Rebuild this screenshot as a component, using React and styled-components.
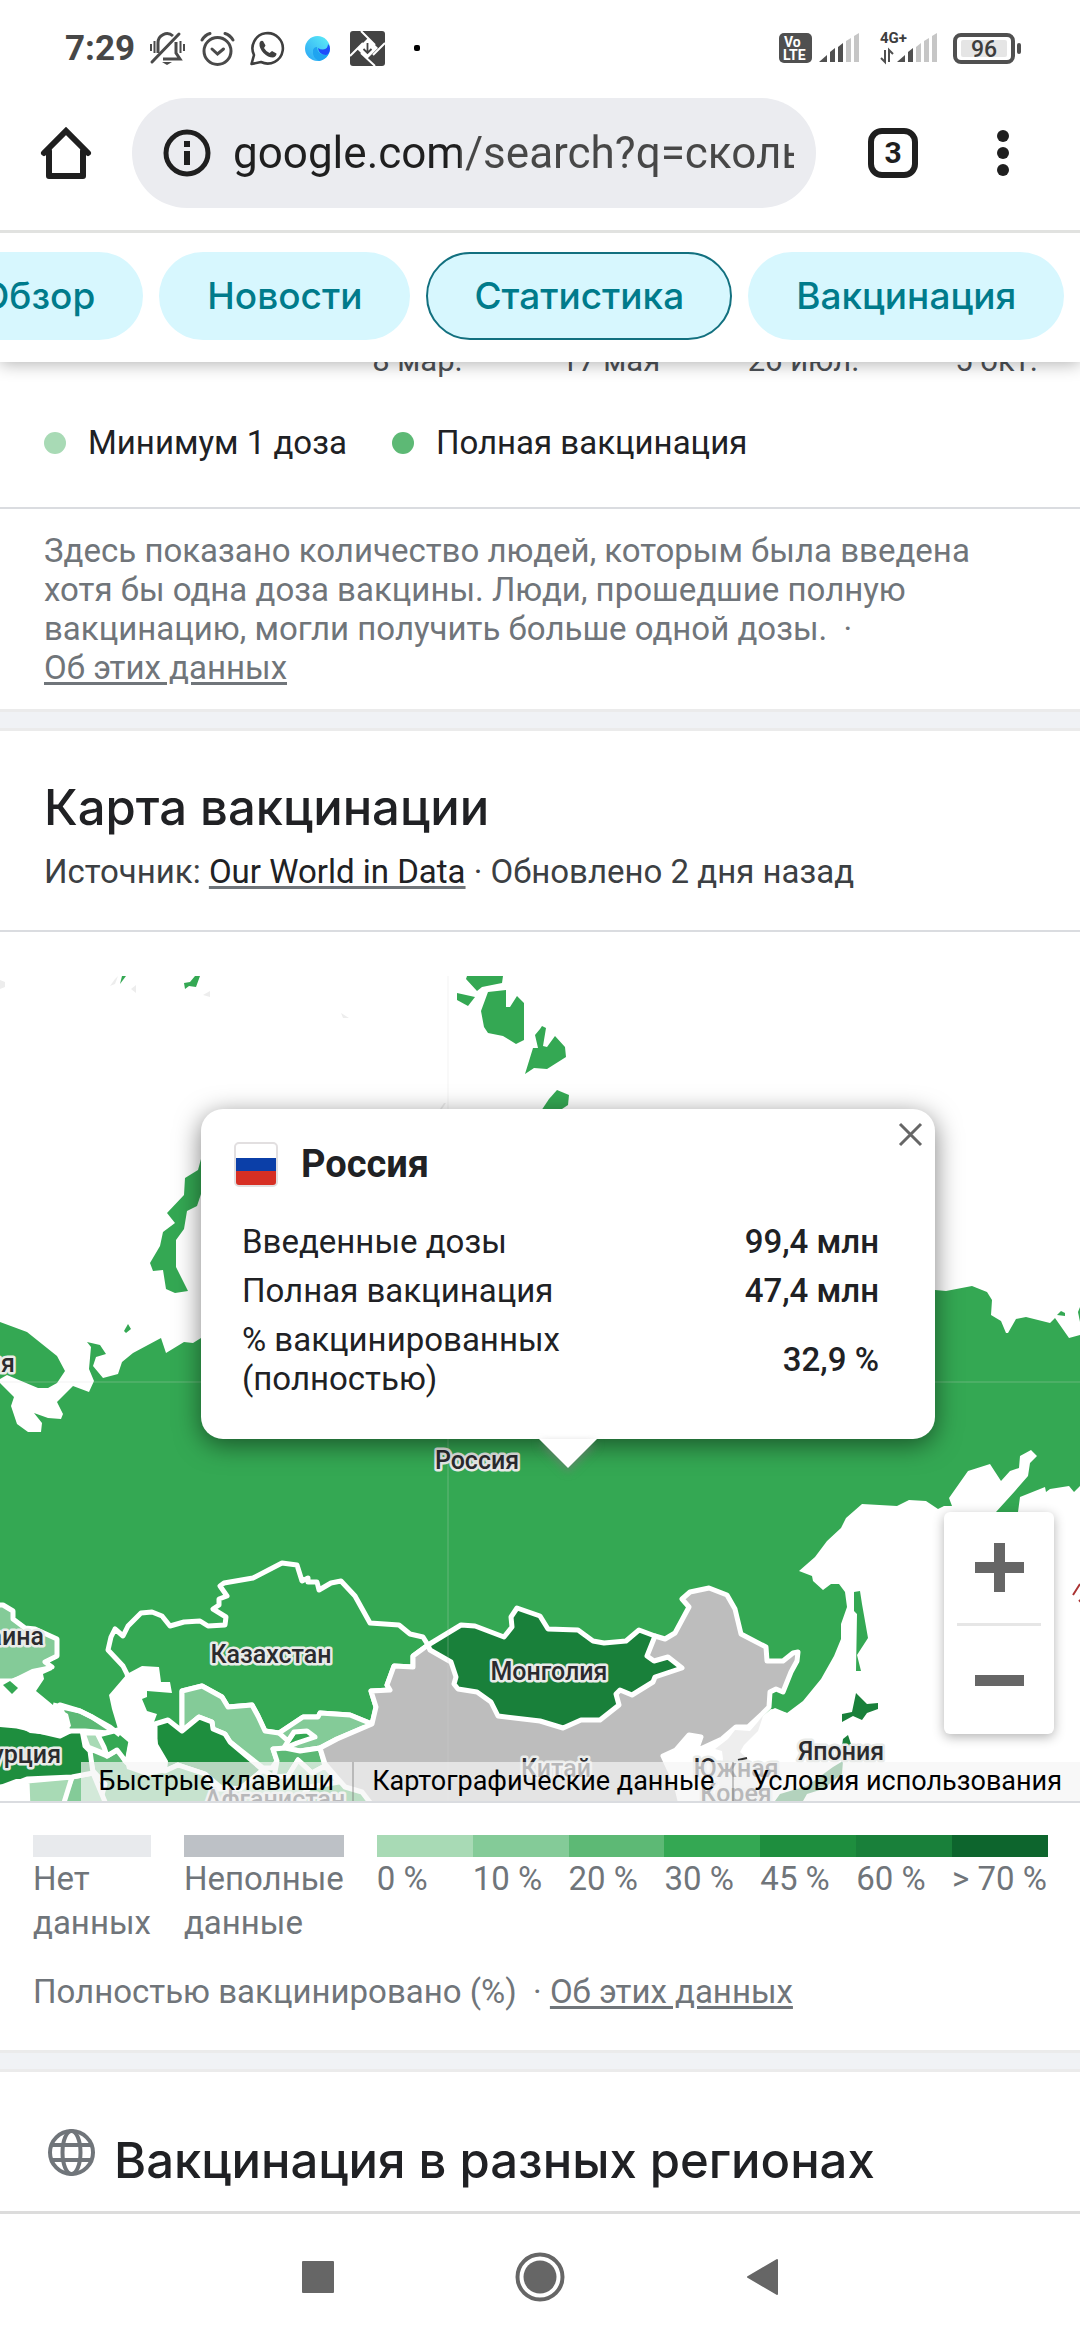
import React from 'react';
import styled, { createGlobalStyle } from 'styled-components';

const GlobalStyle = createGlobalStyle`
  * {
    box-sizing: border-box;
  }
  body {
    margin: 0;
    background-color: #fff;
    color: #202124;
    font-family: Roboto, 'Noto Sans', sans-serif;
    font-size: 33px;
    line-height: 39px;
  }
  button {
    padding: 0;
    border: none;
    background: none;
    color: inherit;
    font: inherit;
    cursor: pointer;
  }
  svg {
    display: block;
    overflow: visible;
  }
`;

const Page = styled.div`
  display: flex;
  flex-direction: column;
  min-height: 100vh;
  overflow: hidden;
`;

const Header = styled.header`
  position: relative;
  z-index: 2;
  background-color: #fff;
  box-shadow: 0 2px 16px rgba(0, 0, 0, 0.3);
`;

const StatusBar = styled.div`
  display: flex;
  justify-content: space-between;
  align-items: center;
  height: 96px;
  padding: 0 58px 0 65px;
  color: #474747;
`;

const StatusGroup = styled.div`
  display: flex;
  align-items: center;
  gap: ${props => props.gap || '15px'};
`;

const Clock = styled.span`
  font-size: 35px;
  font-weight: 700;
`;

const MoreDot = styled.span`
  width: 6px;
  height: 6px;
  margin-left: 14px;
  border-radius: 2px;
  background-color: #000;
`;

const Toolbar = styled.div`
  display: flex;
  align-items: center;
  padding: 2px 71px 22px 41px;
  border-bottom: 3px solid #e1e2e0;
  color: #1f1f1f;
`;

const AddressBar = styled.div`
  display: flex;
  flex: 1;
  align-items: center;
  gap: 22px;
  min-width: 0;
  height: 110px;
  margin: 0 52px 0 41px;
  padding: 0 22px 0 31px;
  border-radius: 55px;
  background-color: #ebecf0;
`;

const AddressInput = styled.input`
  flex: 1;
  min-width: 0;
  padding: 0;
  border: none;
  outline: none;
  background: linear-gradient(to right, #1f1f1f 227px, #474747 227px);
  background-clip: text;
  color: transparent;
  font-family: inherit;
  font-size: 44px;
  line-height: 56px;
`;

const TabsButton = styled.button`
  flex: none;
  width: 50px;
  height: 50px;
  margin-right: 79px;
  border: 6px solid #1f1f1f;
  border-radius: 14px;
  font-size: 30px;
  font-weight: 700;
  line-height: 38px;
`;

const Chips = styled.nav`
  display: flex;
  gap: 16px;
  margin-left: -67px;
  padding: 19px 0 22px;
  overflow: hidden;
`;

const Chip = styled.a`
  flex: none;
  padding: 0 ${props => (props.$active ? '46px' : '48px')};
  border: ${props => (props.$active ? '2px solid #12707f' : 'none')};
  border-radius: 44px;
  background-color: #d7f7fe;
  color: #007b8b;
  font-family: Inter, Roboto, sans-serif;
  font-size: 37px;
  font-weight: 500;
  line-height: ${props => (props.$active ? '84px' : '88px')};
  text-decoration: none;
`;

const AxisDates = styled.div`
  display: grid;
  grid-template-columns: repeat(4, 193px);
  margin: -19px 0 44px 321px;
  color: #4d5156;
  font-size: 31px;
  line-height: 36px;
  text-align: center;
`;

const ChartLegend = styled.div`
  display: flex;
  gap: 45px;
  padding: 0 44px 45px;
`;

const LegendItem = styled.span`
  display: flex;
  align-items: center;
  gap: 22px;
`;

const Dot = styled.span`
  width: 22px;
  height: 22px;
  border-radius: 50%;
  background-color: ${props => props.color};
`;

const Note = styled.p`
  margin: 0;
  padding: 22px 90px 22px 44px;
  border-top: 2px solid #dadce0;
  color: #70757a;
`;

const TextLink = styled.a`
  color: inherit;
  text-decoration-thickness: 3px;
  text-underline-offset: 3px;
`;

const SourceLink = styled(TextLink)`
  color: #202124;
  text-decoration-color: #70757a;
`;

const Band = styled.div`
  height: 22px;
  border-top: 3px solid #ebebeb;
  border-bottom: 3px solid #ebebeb;
  background-color: #f0f2f5;
`;

const CardHeader = styled.div`
  padding: 49px 44px 39px;
  border-bottom: 2px solid #dadce0;
`;

const Title = styled.h2`
  margin: 0;
  font-family: Inter, Roboto, sans-serif;
  font-size: 49px;
  font-weight: 500;
  line-height: 56px;
`;

const Source = styled.p`
  margin: 16px 0 0;
  color: #3c4043;
`;

const MapBox = styled.div`
  position: relative;
  margin-top: 44px;
  border-bottom: 2px solid #dadce0;
`;

const MapLabel = styled.text`
  fill: #2b2b2f;
  stroke: #e9ebe9;
  stroke-width: 5px;
  stroke-linejoin: round;
  paint-order: stroke;
  font-size: 25px;
  font-weight: 500;
  text-anchor: ${props => props.$anchor || 'middle'};
`;

const Popup = styled.div`
  position: absolute;
  top: 133px;
  left: 201px;
  width: 734px;
  padding: 32px 56px 36px 33px;
  border-radius: 22px;
  background-color: #fff;
  box-shadow: 0 6px 26px rgba(0, 0, 0, 0.5);

  &::after {
    content: '';
    position: absolute;
    top: 100%;
    left: 50%;
    margin-left: -29px;
    border: 29px solid transparent;
    border-top-color: #fff;
    border-bottom: none;
    filter: drop-shadow(0 4px 4px rgba(120, 120, 120, 0.6));
  }
`;

const CloseButton = styled.button`
  position: absolute;
  top: 14px;
  right: 13px;
`;

const PopupTitle = styled.h3`
  display: flex;
  align-items: center;
  gap: 23px;
  margin: 0 0 30px;
  font-size: 38px;
  font-weight: 700;
  line-height: 46px;
`;

const Flag = styled.span`
  width: 44px;
  height: 45px;
  border: 2px solid #e2dfe0;
  border-radius: 5px;
  background: linear-gradient(#fff 34%, #0b3fa8 34% 66%, #d72f24 66%);
`;

const StatsTable = styled.table`
  width: 100%;
  border-collapse: collapse;

  th {
    max-width: 360px;
    padding: 5px 8px;
    font-weight: 400;
    text-align: left;
  }
  td {
    padding: 5px 0;
    font-weight: 500;
    text-align: right;
    white-space: nowrap;
  }
`;

const ZoomControl = styled.div`
  position: absolute;
  top: 536px;
  right: 26px;
  display: flex;
  flex-direction: column;
  width: 110px;
  padding: 0 13px;
  border-radius: 6px;
  background-color: #fff;
  box-shadow: 0 3px 12px rgba(0, 0, 0, 0.3);
`;

const ZoomButton = styled.button`
  display: flex;
  justify-content: center;
  align-items: center;
  height: 111px;

  & + & {
    border-top: 3px solid #e6e6e6;
  }
`;

const Attribution = styled.div`
  position: absolute;
  right: 0;
  bottom: 0;
  display: flex;
  background-color: rgba(245, 245, 245, 0.7);
  font-size: 27px;

  a,
  button {
    padding: 0 18px;
    color: #000;
    text-decoration: none;
    white-space: nowrap;
  }
  a {
    border-left: 2px solid rgba(120, 120, 120, 0.4);
  }
`;

const MapLegend = styled.div`
  display: flex;
  gap: 33px;
  padding: 32px 32px 27px 33px;
  color: #70757a;
  line-height: 44px;
`;

const Scale = styled.div`
  display: grid;
  flex: 1;
  grid-template-columns: repeat(7, 1fr);
`;

const LegendCell = styled.div`
  width: ${props => (props.$narrow ? 'min-content' : 'auto')};
  white-space: ${props => (props.$narrow ? 'normal' : 'nowrap')};

  &::before {
    content: '';
    display: block;
    height: 22px;
    background-color: ${props => props.color};
  }
`;

const MapNote = styled.p`
  margin: 0;
  padding: 0 33px 39px;
  color: #70757a;
`;

const RegionsHeader = styled.div`
  display: flex;
  gap: 19px;
  padding: 57px 48px 19px;

  ${Title} {
    padding-top: 4px;
  }
`;

const NavBar = styled.nav`
  display: flex;
  justify-content: center;
  align-items: center;
  gap: 181px;
  height: 129px;
  margin-top: auto;
  border-top: 3px solid #dcdcdc;
`;

const Battery = styled.svg`
  margin-left: 8px;
`;

const MobileSignal = styled.svg`
  margin-left: ${props => (props.$network ? '13px' : '0')};
`;

const GREEN = '#34a853';

const scale = [
  ['0 %', '#a8dab5'],
  ['10 %', '#84cb98'],
  ['20 %', '#5db975'],
  ['30 %', '#34a853'],
  ['45 %', '#1e8e3e'],
  ['60 %', '#19803a'],
  ['> 70 %', '#0d652d'],
];

const stats = [
  ['Введенные дозы', '99,4 млн'],
  ['Полная вакцинация', '47,4 млн'],
  ['% вакцинированных (полностью)', '32,9 %'],
];

// land without outlines: mainland coast and islands
const russia = [
  '0,1384 14,1398 11,1407 17,1425 28,1433 41,1433 42,1424 34,1414 48,1419 61,1420 63,1415 57,1403 73,1387 89,1393 94,1382 89,1370 91,1348 87,1343 100,1346 106,1355 96,1358 93,1367 103,1379 118,1375 122,1363 133,1354 161,1339 166,1354 184,1343 193,1344 201,1339 300,1300 600,1320 935,1291 946,1292 972,1287 987,1293 992,1301 991,1316 1001,1322 1006,1334 1008,1334 1016,1320 1026,1318 1050,1324 1055,1319 1069,1339 1080,1336 1080,1487 1074,1493 1069,1487 1050,1490 1046,1493 1045,1488 1020,1498 1018,1513 1010,1560 996,1550 996,1513 1015,1492 1028,1477 1030,1464 1037,1457 1031,1451 1020,1457 1019,1469 1010,1472 1001,1482 990,1465 968,1472 949,1499 952,1507 944,1507 938,1510 926,1502 909,1501 897,1507 862,1505 846,1519 841,1529 827,1542 815,1558 799,1572 812,1577 813,1582 823,1591 831,1585 839,1585 845,1593 847,1608 841,1625 841,1640 834,1657 821,1680 803,1702 787,1714 775,1709 771,1711 700,1802 0,1802',
  '0,1323 27,1333 57,1357 65,1372 57,1384 48,1389 38,1389 7,1376 0,1380',
  '230,1130 201,1160 198,1171 185,1179 184,1196 167,1214 175,1224 163,1233 160,1247 150,1264 153,1272 163,1271 166,1290 175,1294 188,1292 176,1268 176,1241 184,1230 187,1212 197,1207 201,1195 230,1180',
  '124,1332 128,1325 131,1330 126,1334',
  '184,984 190,983 195,977 200,977 196,988 189,987 185,990',
  '120,985 122,977 126,977',
  '466,980 467,977 503,977 502,984 482,988 477,992',
  '457,994 475,998 468,1007 457,1001',
  '488,993 506,991 506,1008 510,1008 517,997 524,1004 524,1041 516,1045 503,1037 488,1034 484,1028 481,1012',
  '540,1030 535,1036 538,1049 533,1049 525,1075 534,1069 547,1070 566,1058 565,1048 555,1037 547,1048 543,1047 546,1029 542,1027',
  '541,1112 549,1100 557,1091 569,1096 568,1106 559,1112',
  '1057,1316 1061,1312 1065,1314 1065,1317',
  '1080,1308 1078,1313 1080,1323',
  '854,1593 860,1592 862,1605 868,1639 857,1656 861,1672 856,1672 857,1615 854,1612',
];

const countries = [
  // Kazakhstan
  [GREEN, '428,1646 423,1638 410,1635 399,1626 370,1624 355,1597 341,1582 331,1584 319,1591 317,1583 308,1583 308,1579 302,1582 297,1566 282,1564 253,1579 224,1584 220,1587 227,1597 219,1600 219,1606 213,1610 226,1618 225,1626 208,1627 200,1622 184,1623 170,1627 162,1617 152,1613 141,1614 128,1627 123,1637 115,1630 111,1638 108,1651 123,1667 127,1675 140,1730 182,1732 182,1692 202,1687 222,1698 228,1708 252,1706 258,1717 265,1732 279,1734 303,1718 318,1718 320,1714 350,1716 372,1725 376,1708 371,1692 390,1691 387,1686 394,1667 413,1668 413,1657'],
  // Uzbekistan
  ['#84cb98', '182,1732 182,1692 202,1687 222,1698 228,1708 252,1706 258,1717 265,1732 279,1734 294,1733 283,1750 273,1750 277,1762 272,1769 263,1769 230,1743 225,1735 213,1730 212,1723 199,1718'],
  // Kyrgyzstan
  ['#84cb98', '279,1734 303,1718 318,1718 320,1714 350,1716 372,1725 337,1740 320,1749 300,1752 285,1749 297,1744 315,1738 307,1732 294,1733 288,1742'],
  // Turkmenistan
  ['#1e8e3e', '155,1725 168,1721 182,1732 199,1718 212,1723 213,1730 225,1735 230,1743 263,1771 240,1790 220,1788 205,1775 178,1766 165,1772 155,1750'],
  // Tajikistan
  ['#5db975', '273,1750 285,1749 300,1752 320,1749 325,1767 312,1774 298,1761 288,1777 274,1778 277,1762'],
  // Afghanistan
  ['#a8dab5', '205,1802 214,1790 240,1790 263,1771 274,1778 288,1777 298,1761 312,1774 325,1767 339,1783 310,1788 290,1810 205,1810'],
  // Iran
  ['#5db975', '88,1749 107,1757 119,1750 125,1762 165,1772 178,1766 205,1775 216,1790 205,1810 98,1810 105,1785 93,1772'],
  // Iraq and Syria
  ['#84cb98', '72,1778 93,1774 108,1810 60,1810'],
  ['#a8dab5', '27,1782 72,1778 62,1810 28,1810'],
  // Turkey
  ['#1e8e3e', '-6,1725 17,1727 60,1737 72,1731 82,1731 85,1747 90,1752 93,1774 72,1778 27,1780 7,1788 -6,1788'],
  // Caucasus
  ['#5db975', '60,1706 80,1712 92,1718 110,1730 108,1734 85,1732 68,1732'],
  ['#a8dab5', '83,1734 98,1734 108,1756 88,1748'],
  [GREEN, '98,1736 118,1731 131,1742 127,1764 117,1751 107,1757 104,1748'],
  // Ukraine
  ['#84cb98', '-6,1606 3,1606 13,1612 13,1620 25,1629 35,1630 57,1640 57,1657 45,1663 52,1668 12,1682 -6,1682'],
  // China
  ['#bdbdbd', '428,1646 413,1657 413,1668 394,1667 387,1686 390,1691 371,1692 376,1708 372,1725 337,1740 320,1749 325,1765 345,1788 362,1793 375,1810 682,1810 676,1785 663,1757 676,1751 689,1736 701,1738 696,1752 722,1740 736,1728 748,1728 762,1715 769,1708 770,1693 776,1690 783,1693 791,1673 797,1662 798,1653 793,1654 783,1662 767,1662 766,1648 741,1635 735,1610 727,1596 709,1589 690,1593 682,1600 689,1608 675,1634 665,1640 655,1637 540,1690'],
  // Mongolia
  ['#19803a', '428,1646 461,1626 475,1627 504,1638 512,1628 511,1618 517,1609 540,1617 548,1630 578,1631 593,1642 604,1644 626,1642 639,1631 655,1637 647,1657 654,1662 668,1658 682,1669 655,1678 653,1683 632,1696 620,1691 616,1695 619,1706 600,1721 581,1721 563,1729 540,1722 498,1717 491,1703 477,1693 458,1690 454,1685 456,1678 451,1663 430,1651'],
];

const seas = [
  '-6,1680 12,1680 32,1670 52,1666 52,1671 43,1675 44,1680 36,1692 53,1706 68,1715 71,1727 60,1737 30,1734 17,1727 -6,1727',
  '127,1675 109,1696 112,1710 118,1730 129,1742 125,1762 127,1770 147,1777 167,1773 168,1762 158,1745 154,1723 157,1715 147,1712 142,1700 147,1698 147,1692 172,1694 170,1683 161,1683 159,1668 142,1667',
  '682,1802 676,1785 663,1757 676,1751 689,1736 701,1738 696,1752 722,1742 736,1730 748,1730 764,1716 771,1710 787,1714 800,1730 800,1802',
  '0,1786 16,1780 27,1780 28,1802 0,1802',
];

const korea = '763,1717 758,1732 744,1746 740,1753 757,1768 765,1790 762,1802 720,1802 718,1775 723,1760 722,1752 715,1750 728,1740 735,1731 750,1732';

const japan = [
  '856,1694 867,1705 878,1704 878,1710 867,1714 862,1721 853,1717 842,1723 842,1715 852,1713',
  '843,1740 848,1736 852,1748 842,1747',
  '843,1762 842,1775 823,1790 807,1795 803,1802 775,1802 780,1795 807,1787 833,1768',
];

const MapCanvas = styled.svg`
  width: 100%;
  overflow: hidden;
`;

const VaccinationMap = () => (
  <MapCanvas viewBox="0 977 1080 825" role="img" aria-label="Карта вакцинации">
    <g fill="#ededed">
      <path d="M0 981l5 2v5l-5 2zM110 987l5-7 3-3-3 8zM131 990l5-4v8zM203 996l7-4v6zM341 1014l8 5h-6zM440 1110l4-6h2l-4 6z" />
    </g>
    <g fill={GREEN}>
      {russia.map(points => <polygon key={points} points={points} />)}
    </g>
    <g stroke="#fff" strokeWidth="5" strokeLinejoin="round">
      {countries.map(([fill, points]) => <polygon key={points} fill={fill} points={points} />)}
    </g>
    <path d="M53 1706l27 6 12 6 18 10 10 8" fill="none" stroke="#fff" strokeWidth="5" />
    <g fill="#fff">
      {seas.map(points => <polygon key={points} points={points} />)}
    </g>
    <polygon points="3,1686 10,1682 18,1689 12,1695" fill={GREEN} />
    <polygon points={korea} fill="#eee" />
    <path d="M738 1761l9-2M735 1768q-4 6 0 12M734 1788v14" fill="none" stroke="#333" strokeWidth="2" />
    <g fill="#19803a">
      {japan.map(points => <polygon key={points} points={points} />)}
    </g>
    <path d="M448 977v825M0 1383h1080" stroke="#d8d8d8" strokeOpacity="0.3" strokeWidth="1" />
    <path d="M1073 1596l7-11M1079 1601l3 3" stroke="#a33" strokeWidth="2" />
    <MapLabel x="477" y="1470">Россия</MapLabel>
    <MapLabel x="271" y="1664">Казахстан</MapLabel>
    <MapLabel x="549" y="1681">Монголия</MapLabel>
    <MapLabel x="841" y="1761">Япония</MapLabel>
    <MapLabel x="556" y="1778">Китай</MapLabel>
    <MapLabel x="736" y="1778">Южная</MapLabel>
    <MapLabel x="736" y="1803">Корея</MapLabel>
    <MapLabel x="275" y="1809">Афганистан</MapLabel>
    <MapLabel x="44" y="1646" $anchor="end">Украина</MapLabel>
    <MapLabel x="61" y="1764" $anchor="end">Турция</MapLabel>
    <MapLabel x="15" y="1373" $anchor="end">Финляндия</MapLabel>
  </MapCanvas>
);

const MutedIcon = () => (
  <svg width="35" height="35" viewBox="0 0 35 35" fill="none" stroke="#4a4a4a" strokeWidth="3">
    <path d="M8 22V12a9 9 0 0 1 15-7M26 11v11l4 6H13" />
    <path d="M2 31L29 3" strokeLinecap="round" />
    <path d="M1 13v7M4.500 10v12M34 13v7M30.500 10v12" strokeWidth="2" />
    <path d="M12 31h10l-5 3z" fill="#4a4a4a" stroke="none" />
  </svg>
);

const AlarmIcon = () => (
  <svg width="35" height="35" viewBox="0 0 35 35" fill="none" stroke="#4a4a4a" strokeWidth="3" strokeLinecap="round">
    <circle cx="17.500" cy="20" r="13.500" />
    <path d="M12 18l5.500 5 6-5M2 9q3-5 8-6.500M33 9q-3-5-8-6.500" />
  </svg>
);

const WhatsAppIcon = () => (
  <svg width="35" height="35" viewBox="0 0 35 35">
    <path d="M1.500 33l2.500-9A15.200 15.200 0 1 1 11 31z" fill="none" stroke="#3f3f3f" strokeWidth="2.600" strokeLinejoin="round" />
    <path d="M9.500 12q1-3 3.500-2l2.500 4.500-1.500 2.500q2 3.500 5.500 5l2.500-2 4.500 2.500q0 3-3.500 4-5 0-9.500-4.500-4.500-5-4-10z" fill="#3f3f3f" />
  </svg>
);

const SwirlIcon = () => (
  <svg width="35" height="35" viewBox="0 0 35 35">
    <defs>
      <linearGradient id="swirl" x1="0" y1="1" x2="1" y2="0">
        <stop offset="0" stopColor="#2aa4f5" />
        <stop offset="1" stopColor="#5ff0f7" />
      </linearGradient>
    </defs>
    <circle cx="17.500" cy="17.500" r="12.500" fill="url(#swirl)" />
    <path d="M13 19q-1 8 6 11a12.500 12.500 0 0 0 10-8q-4 3-8 1-4-2-4-7-3 0-4 3z" fill="#1fa4f0" />
    <path d="M18 17q1 7 8 7 4-1 4-6.500 0-3-2-4.500 0 5-5 5.500-3 0-5-1.500z" fill="#1f4dfb" />
  </svg>
);

const DownloadTile = () => (
  <svg width="35" height="35" viewBox="0 0 35 35">
    <rect width="35" height="35" rx="3" fill="#434343" />
    <path d="M18 7l10 10-11 11L7 18z" fill="#fff" />
    <path d="M11 0l14 14M35 12L23 24M25 35L11 22M0 25l13-13" stroke="#fff" strokeWidth="2" />
    <path d="M17.500 12v10M13.500 18l4 4 4-4" fill="none" stroke="#434343" strokeWidth="1.800" />
  </svg>
);

const Signal = ({ active, network }) => (
  <MobileSignal $network={network} width={network ? 58 : 41} height="34" viewBox={network ? '0 0 58 34' : '17 0 41 34'}>
    {network && (
      <>
        <text x="0" y="12" fontSize="15" fontWeight="700" fill="#3d3d3d">{network}</text>
        <path d="M5 19v12l-4-4M9 31V19l4 4" fill="none" stroke="#505050" strokeWidth="2" />
      </>
    )}
    {['17,31 25,24 25,31', '28,21 33,17 33,31 28,31', '36,16 41,12 41,31 36,31', '44,10 49,7 49,31 44,31', '52,5 57,2 57,31 52,31'].map((points, i) => (
      <polygon key={points} points={points} fill={i < active ? '#505050' : '#c6c6c6'} />
    ))}
  </MobileSignal>
);

export default function App() {
  return (
    <Page>
      <GlobalStyle />
      <Header>
        <StatusBar>
          <StatusGroup>
            <Clock>7:29</Clock>
            <MutedIcon />
            <AlarmIcon />
            <WhatsAppIcon />
            <SwirlIcon />
            <DownloadTile />
            <MoreDot />
          </StatusGroup>
          <StatusGroup gap="7px">
            <svg width="33" height="30" viewBox="0 0 33 30">
              <rect width="33" height="30" rx="5" fill="#505050" />
              <g fill="#fff" fontSize="14" fontWeight="700">
                <text x="5" y="14">Vo</text>
                <text x="4" y="27">LTE</text>
              </g>
            </svg>
            <Signal active={3} />
            <Signal active={2} network="4G+" />
            <Battery width="69" height="31" viewBox="0 0 69 31">
              <rect x="2" y="2" width="58" height="27" rx="6" fill="#fff" stroke="#505050" strokeWidth="4" />
              <rect x="8" y="7" width="46" height="17" rx="2" fill="#e5e5e5" />
              <rect x="64" y="10" width="4" height="11" rx="2" fill="#505050" />
              <text x="31" y="24" fontSize="23" fontWeight="500" textAnchor="middle" fill="#3d3d3d">96</text>
            </Battery>
          </StatusGroup>
        </StatusBar>
        <Toolbar>
          <button aria-label="Главная страница">
            <svg width="50" height="52" viewBox="0 0 50 52" fill="none" stroke="currentColor" strokeWidth="6" strokeLinejoin="round" strokeLinecap="round">
              <path d="M3 26L25 4l22 22" strokeLinejoin="miter" />
              <path d="M8 24v25h34V24" />
            </svg>
          </button>
          <AddressBar>
            <button aria-label="Сведения о сайте">
              <svg width="48" height="48" viewBox="0 0 48 48">
                <circle cx="24" cy="24" r="21" fill="none" stroke="currentColor" strokeWidth="5" />
                <path d="M21 12h6v6h-6zM21 22h6v14h-6z" fill="currentColor" />
              </svg>
            </button>
            <AddressInput aria-label="Адресная строка" defaultValue="google.com/search?q=сколько" />
          </AddressBar>
          <TabsButton aria-label="Вкладки">3</TabsButton>
          <button aria-label="Меню">
            <svg width="12" height="46" viewBox="0 0 12 46" fill="currentColor">
              <circle cx="6" cy="6" r="6" />
              <circle cx="6" cy="23" r="6" />
              <circle cx="6" cy="40" r="6" />
            </svg>
          </button>
        </Toolbar>
        <Chips>
          <Chip href="#overview">Обзор</Chip>
          <Chip href="#news">Новости</Chip>
          <Chip href="#stats" $active>Статистика</Chip>
          <Chip href="#vaccine">Вакцинация</Chip>
          <Chip href="#tests">Тесты</Chip>
        </Chips>
      </Header>

      <section>
        <AxisDates>
          <span>8 мар.</span>
          <span>17 мая</span>
          <span>26 июл.</span>
          <span>5 окт.</span>
        </AxisDates>
        <ChartLegend>
          <LegendItem><Dot color="#a8dab5" />Минимум 1 доза</LegendItem>
          <LegendItem><Dot color="#5db975" />Полная вакцинация</LegendItem>
        </ChartLegend>
        <Note>
          Здесь показано количество людей, которым была введена хотя бы одна доза вакцины. Люди, прошедшие полную
          вакцинацию, могли получить больше одной дозы.&nbsp; ·<br />
          <TextLink href="#about">Об этих данных</TextLink>
        </Note>
      </section>
      <Band />

      <section>
        <CardHeader>
          <Title>Карта вакцинации</Title>
          <Source>
            Источник: <SourceLink href="#owid">Our World in Data</SourceLink> · Обновлено 2 дня назад
          </Source>
        </CardHeader>
        <MapBox>
          <VaccinationMap />
          <Attribution>
            <button>Быстрые клавиши</button>
            <a href="#map-data">Картографические данные</a>
            <a href="#terms">Условия использования</a>
          </Attribution>
          <Popup>
            <CloseButton aria-label="Закрыть">
              <svg width="23" height="23" viewBox="0 0 23 23" stroke="#666" strokeWidth="3">
                <path d="M1 1l21 21M22 1L1 22" />
              </svg>
            </CloseButton>
            <PopupTitle><Flag />Россия</PopupTitle>
            <StatsTable>
              <tbody>
                {stats.map(([name, value]) => (
                  <tr key={name}>
                    <th scope="row">{name}</th>
                    <td>{value}</td>
                  </tr>
                ))}
              </tbody>
            </StatsTable>
          </Popup>
          <ZoomControl>
            <ZoomButton aria-label="Увеличить">
              <svg width="49" height="49" viewBox="0 0 49 49" fill="#666">
                <path d="M19 0h11v19h19v11H30v19H19V30H0V19h19z" />
              </svg>
            </ZoomButton>
            <ZoomButton aria-label="Уменьшить">
              <svg width="49" height="11" viewBox="0 0 49 11" fill="#666">
                <path d="M0 0h49v11H0z" />
              </svg>
            </ZoomButton>
          </ZoomControl>
        </MapBox>
        <MapLegend>
          <LegendCell $narrow color="#e8eaed">Нет данных</LegendCell>
          <LegendCell $narrow color="#bdc1c6">Неполные данные</LegendCell>
          <Scale>
            {scale.map(([label, color]) => (
              <LegendCell key={label} color={color}>{label}</LegendCell>
            ))}
          </Scale>
        </MapLegend>
        <MapNote>
          Полностью вакцинировано (%)&nbsp; · <TextLink href="#about-map">Об этих данных</TextLink>
        </MapNote>
      </section>
      <Band />

      <RegionsHeader>
        <svg width="47" height="47" viewBox="0 0 47 47" fill="none" stroke="#70757a" strokeWidth="4">
          <circle cx="23.500" cy="23.500" r="21.500" />
          <ellipse cx="23.500" cy="23.500" rx="9" ry="21.500" />
          <path d="M4 16h39M4 31h39" />
        </svg>
        <Title>Вакцинация в разных регионах</Title>
      </RegionsHeader>

      <NavBar>
        <button aria-label="Недавние приложения">
          <svg width="32" height="32" viewBox="0 0 32 32">
            <rect width="32" height="32" rx="1" fill="#666" />
          </svg>
        </button>
        <button aria-label="Домой">
          <svg width="50" height="50" viewBox="0 0 50 50">
            <circle cx="25" cy="25" r="22.500" fill="none" stroke="#666" strokeWidth="4" />
            <circle cx="25" cy="25" r="16.500" fill="#666" />
          </svg>
        </button>
        <button aria-label="Назад">
          <svg width="32" height="38" viewBox="0 0 32 38">
            <path d="M31 2v34L2 19z" fill="#666" stroke="#666" strokeWidth="2" strokeLinejoin="round" />
          </svg>
        </button>
      </NavBar>
    </Page>
  );
}
